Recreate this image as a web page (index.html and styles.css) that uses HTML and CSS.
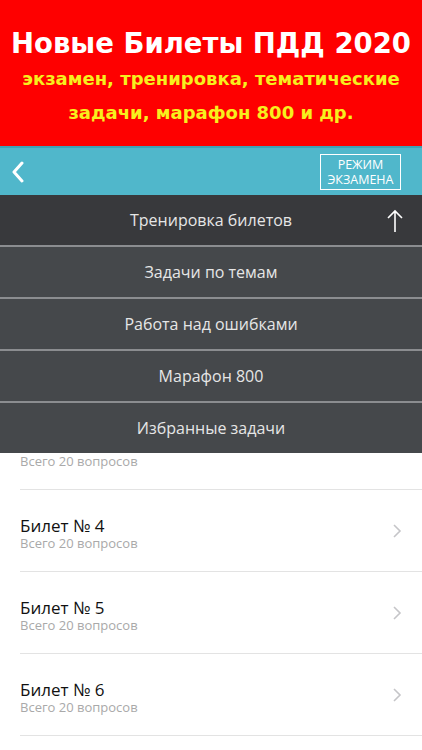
FILE: index.html
```html
<!DOCTYPE html>
<html lang="ru">
<head>
    <meta charset="UTF-8">
    <meta name="viewport" content="width=device-width, initial-scale=1.0">
    <title>Билеты ПДД</title>
    <link rel="stylesheet" href="styles.css">
</head>
<body>
    <div class="banner">
        <div class="banner-title">Новые Билеты ПДД 2020</div>
        <div class="banner-sub">экзамен, тренировка, тематические</div>
        <div class="banner-sub">задачи, марафон 800 и др.</div>
    </div>

    <div class="topbar">
        <svg class="back" width="14" height="22" viewBox="0 0 14 22">
            <path d="M11 2 L3 11 L11 20" fill="none" stroke="#fff" stroke-width="3" stroke-linecap="round" stroke-linejoin="round"/>
        </svg>
        <div class="exam-btn">РЕЖИМ<br>ЭКЗАМЕНА</div>
    </div>

    <div class="content">
        <!-- список прокручен: билеты 1-2 ушли под меню -->
        <div class="list-scrolled"></div>

        <div class="ticket partial"><div class="ticket-inner">
            <div><div class="ticket-sub">Всего 20 вопросов</div></div>
            <svg class="chev" width="10" height="16" viewBox="0 0 10 16"><path d="M2 2 L8 8 L2 14" fill="none" stroke="#c5c5c8" stroke-width="1.6"/></svg>
        </div></div>
        <div class="ticket"><div class="ticket-inner">
            <div><div class="ticket-title">Билет № 4</div><div class="ticket-sub">Всего 20 вопросов</div></div>
            <svg class="chev" width="10" height="16" viewBox="0 0 10 16"><path d="M2 2 L8 8 L2 14" fill="none" stroke="#c5c5c8" stroke-width="1.6"/></svg>
        </div></div>
        <div class="ticket"><div class="ticket-inner">
            <div><div class="ticket-title">Билет № 5</div><div class="ticket-sub">Всего 20 вопросов</div></div>
            <svg class="chev" width="10" height="16" viewBox="0 0 10 16"><path d="M2 2 L8 8 L2 14" fill="none" stroke="#c5c5c8" stroke-width="1.6"/></svg>
        </div></div>
        <div class="ticket"><div class="ticket-inner">
            <div><div class="ticket-title">Билет № 6</div><div class="ticket-sub">Всего 20 вопросов</div></div>
            <svg class="chev" width="10" height="16" viewBox="0 0 10 16"><path d="M2 2 L8 8 L2 14" fill="none" stroke="#c5c5c8" stroke-width="1.6"/></svg>
        </div></div>

        <!-- выпадающее меню поверх списка -->
        <div class="menu">
            <div class="menu-item current">Тренировка билетов
                <svg class="arrow-up" width="16" height="24" viewBox="0 0 16 24">
                    <path d="M8 23 V2 M1 9 L8 2 L15 9" fill="none" stroke="#fff" stroke-width="1.6"/>
                </svg>
            </div>
            <div class="menu-item">Задачи по темам</div>
            <div class="menu-item">Работа над ошибками</div>
            <div class="menu-item">Марафон 800</div>
            <div class="menu-item">Избранные задачи</div>
        </div>
    </div>
</body>
</html>
```

FILE: styles.css
```css
body {
    margin: 0;
    width: 422px;
    height: 750px;
    overflow: hidden;
    background-color: #ffffff;
    font-family: 'Open Sans', sans-serif;
}

.banner {
    height: 146px;
    background-color: #fe0000;
    display: flex;
    flex-direction: column;
    align-items: center;
    padding-top: 24px;
    box-sizing: border-box;
    font-family: 'DejaVu Sans', sans-serif;
    font-weight: bold;
}

.banner-title {
    color: #ffffff;
    font-size: 27.5px;
    line-height: 38px;
    height: 38px;
}

.banner-sub {
    color: #f7ef1e;
    font-size: 18px;
    line-height: 34px;
}

.topbar {
    height: 49px;
    background-color: #50b7cb;
    display: flex;
    align-items: center;
    justify-content: space-between;
    padding: 0 21px 0 11px;
    border-top: 2px solid #3fa2b6;
    box-sizing: border-box;
}

.exam-btn {
    border: 1px solid #ffffff;
    color: #ffffff;
    font-size: 12.5px;
    line-height: 15px;
    text-align: center;
    width: 79px;
    padding: 2px 0;
}

.content {
    position: relative;
}

.list-scrolled {
    height: 213px;
}

.ticket {
    padding-left: 20px;
}

.ticket-inner {
    height: 82px;
    box-sizing: border-box;
    border-bottom: 1px solid #e3e3e3;
    display: flex;
    align-items: center;
    justify-content: space-between;
    padding: 4px 20px 0 0;
}

.ticket-title {
    font-size: 17px;
    line-height: 20px;
    color: #111111;
}

.ticket-sub {
    font-size: 13px;
    line-height: 14px;
    color: #a9a9a9;
}

.ticket.partial .ticket-inner {
    align-items: flex-end;
    padding-bottom: 21px;
}

.ticket.partial .chev {
    margin-bottom: 20px;
}

.menu {
    position: absolute;
    top: 0;
    left: 0;
    right: 0;
}

.menu-item {
    position: relative;
    height: 50px;
    border-bottom: 2px solid #8b8d90;
    background-color: #45484b;
    color: #e6e6e6;
    font-size: 16px;
    display: flex;
    align-items: center;
    justify-content: center;
}

.menu-item.current {
    background-color: #38393c;
}

.menu-item:last-child {
    border-bottom: none;
}

.arrow-up {
    position: absolute;
    right: 19px;
    top: 14px;
}

.chev {
    margin-top: -4px;
}
```
